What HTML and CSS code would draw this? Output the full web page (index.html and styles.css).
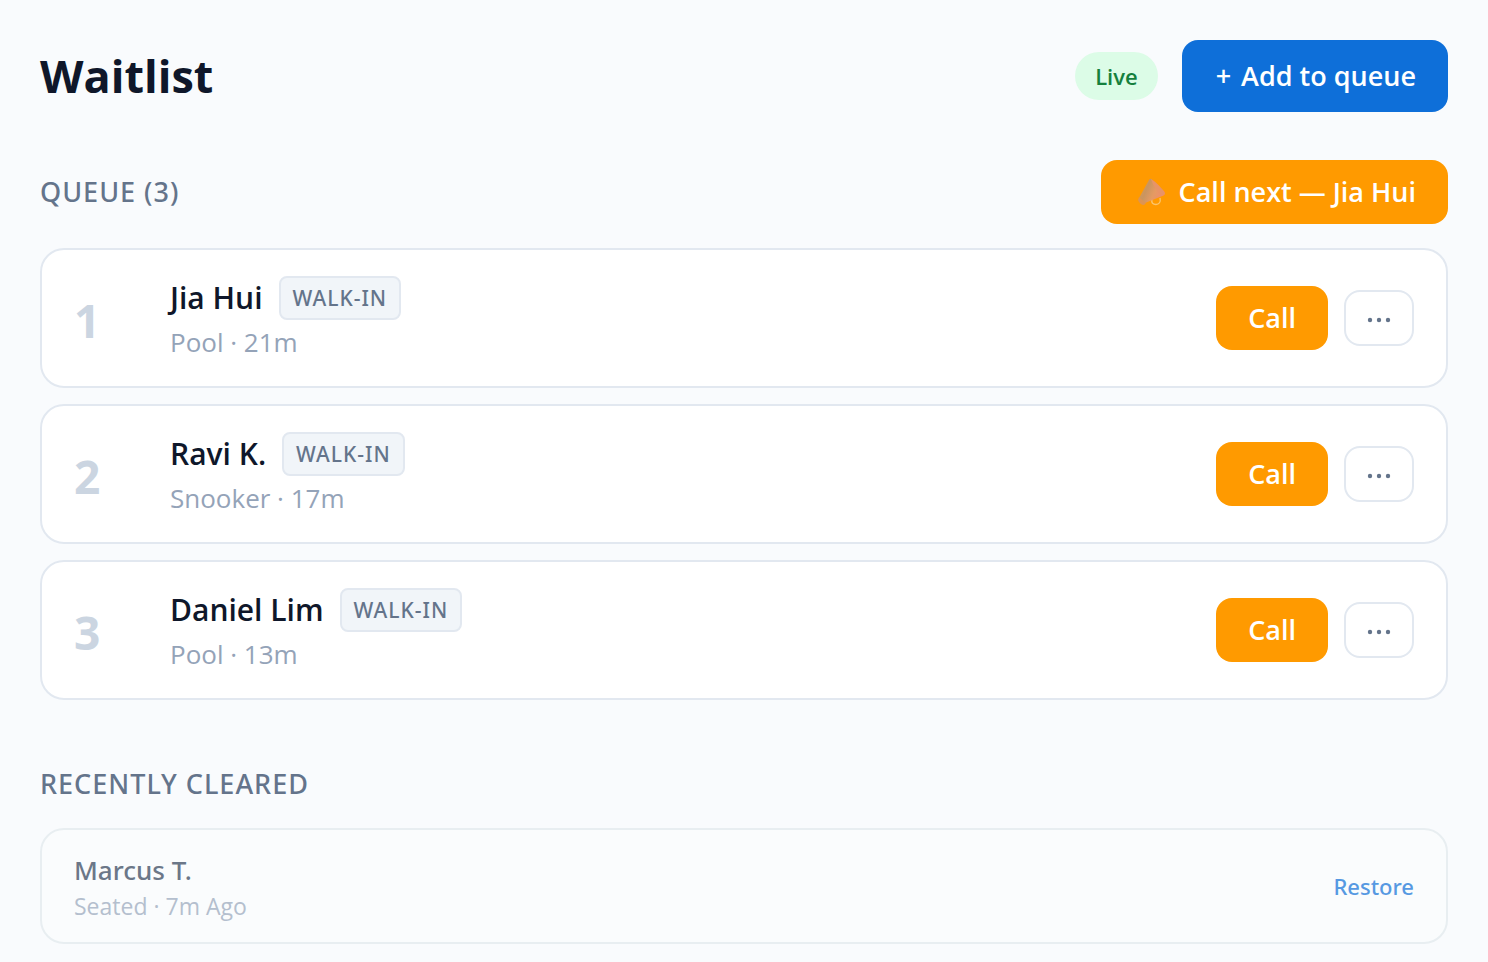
FILE: index.html
```html
<!DOCTYPE html>
<html lang="en">
<head>
<meta charset="utf-8">
<meta name="viewport" content="width=device-width, initial-scale=1">
<title>Waitlist</title>
<link rel="stylesheet" href="styles.css">
</head>
<body>
<main class="page">
  <header class="page-header">
    <h1 class="title">Waitlist</h1>
    <div class="header-actions">
      <span class="live">Live</span>
      <button type="button" class="btn btn-primary"><span>+</span><span>Add to queue</span></button>
    </div>
  </header>

  <section class="queue">
    <div class="section-header">
      <h2 class="section-title">QUEUE (3)</h2>
      <button type="button" class="btn btn-next">
        <svg class="horn" viewBox="0 0 30 30" aria-hidden="true">
          <defs>
            <linearGradient id="horn-fill" x1="0" y1="0.3" x2="1" y2="0.7">
              <stop offset="0" stop-color="#dc9a4c"/>
              <stop offset="0.3" stop-color="#c99560"/>
              <stop offset="0.6" stop-color="#e59a62"/>
              <stop offset="1" stop-color="#f08a70"/>
            </linearGradient>
          </defs>
          <path d="M15 22C14 26 16 27.500 19 27.500S24 25 23 21" fill="none" stroke="#fbc56c" stroke-width="1.300"/>
          <path d="M12 3Q13 1 15 2.500L27 14Q29 17 26.500 18.500L8 26L2 21Z" fill="url(#horn-fill)"/>
          <path d="M14 2Q22 7 27.500 16Q27.500 18 25.500 18.500Q17 12 14 2Z" fill="#e79468"/>
          <path d="M2 20L9 26L7 28Q3 28 1 23Z" fill="#dd9453"/>
        </svg>
        <span>Call next — Jia Hui</span>
      </button>
    </div>
    <ol class="list">
      <li class="card">
        <span class="rank">1</span>
        <div class="guest">
          <div class="name-row"><span class="name">Jia Hui</span><span class="tag">WALK-IN</span></div>
          <div class="meta">Pool · 21m</div>
        </div>
        <button type="button" class="btn btn-call">Call</button>
        <button type="button" class="btn-more" aria-label="More actions for Jia Hui"><svg class="dots" viewBox="0 0 24 6" aria-hidden="true"><circle cx="3" cy="3" r="2.200"/><circle cx="12" cy="3" r="2.200"/><circle cx="21" cy="3" r="2.200"/></svg></button>
      </li>
      <li class="card">
        <span class="rank">2</span>
        <div class="guest">
          <div class="name-row"><span class="name">Ravi K.</span><span class="tag">WALK-IN</span></div>
          <div class="meta">Snooker · 17m</div>
        </div>
        <button type="button" class="btn btn-call">Call</button>
        <button type="button" class="btn-more" aria-label="More actions for Ravi K."><svg class="dots" viewBox="0 0 24 6" aria-hidden="true"><circle cx="3" cy="3" r="2.200"/><circle cx="12" cy="3" r="2.200"/><circle cx="21" cy="3" r="2.200"/></svg></button>
      </li>
      <li class="card">
        <span class="rank">3</span>
        <div class="guest">
          <div class="name-row"><span class="name">Daniel Lim</span><span class="tag">WALK-IN</span></div>
          <div class="meta">Pool · 13m</div>
        </div>
        <button type="button" class="btn btn-call">Call</button>
        <button type="button" class="btn-more" aria-label="More actions for Daniel Lim"><svg class="dots" viewBox="0 0 24 6" aria-hidden="true"><circle cx="3" cy="3" r="2.200"/><circle cx="12" cy="3" r="2.200"/><circle cx="21" cy="3" r="2.200"/></svg></button>
      </li>
    </ol>
  </section>

  <section class="cleared">
    <h2 class="section-title">RECENTLY CLEARED</h2>
    <div class="cleared-card">
      <div class="guest">
        <div class="cleared-name">Marcus T.</div>
        <div class="cleared-meta">Seated · 7m Ago</div>
      </div>
      <button type="button" class="restore">Restore</button>
    </div>
  </section>
</main>
</body>
</html>
```
FILE: styles.css
```css
* { box-sizing: border-box; }

body {
  margin: 0;
  background: #f9fbfd;
  color: #0f172a;
  font-family: "Open Sans", "Noto Sans", sans-serif;
}

h1, h2, ol { margin: 0; padding: 0; }
button { font-family: inherit; cursor: pointer; }

.page {
  display: flex;
  flex-direction: column;
  padding: 40px 40px 18px;
}

.page-header,
.section-header {
  display: flex;
  align-items: center;
  justify-content: space-between;
}

.page-header { margin-bottom: 48px; }
.section-header { margin-bottom: 24px; }

.title {
  font-size: 45px;
  line-height: 64px;
  font-weight: 700;
}

.header-actions {
  display: flex;
  align-items: center;
  gap: 24px;
}

.live {
  padding: 8px 20px;
  border-radius: 24px;
  background: #dcfce7;
  color: #15803d;
  font-size: 22px;
  line-height: 32px;
  font-weight: 600;
}

.btn {
  border: 0;
  border-radius: 16px;
  color: #fff;
  font-size: 27px;
  line-height: 40px;
  font-weight: 600;
}

.btn-primary {
  display: flex;
  gap: 10px;
  padding: 16px 32px 16px 34px;
  background: #0e6fd9;
}

.btn-next,
.btn-call { padding: 12px 32px; background: #ff9a00; }

.btn-next {
  display: flex;
  align-items: center;
  gap: 12px;
  padding-left: 36px;
}

.horn { width: 30px; height: 30px; }

.section-title {
  color: #64748b;
  font-family: "Noto Sans", "Open Sans", sans-serif;
  font-size: 27px;
  line-height: 40px;
  font-weight: 500;
  letter-spacing: 1px;
}

.list {
  display: flex;
  flex-direction: column;
  gap: 16px;
  list-style: none;
}

.card {
  display: flex;
  align-items: center;
  gap: 16px;
  padding: 24px 32px;
  border: 2px solid #e2e8f0;
  border-radius: 24px;
  background: #fff;
}

.rank {
  width: 80px;
  padding-top: 4px;
  color: #cbd5e1;
  font-size: 46px;
  line-height: 64px;
  font-weight: 700;
}

.guest { flex: 1; min-width: 0; }

.name-row {
  display: flex;
  align-items: center;
  gap: 16px;
}

.name {
  font-size: 30px;
  line-height: 48px;
  font-weight: 600;
}

.tag {
  padding: 4px 12px;
  border: 2px solid #e2e8f0;
  border-radius: 8px;
  background: #f1f5f9;
  color: #64748b;
  font-family: "Noto Sans", "Open Sans", sans-serif;
  font-size: 21px;
  line-height: 32px;
  font-weight: 500;
  letter-spacing: 1px;
}

.meta {
  color: #94a3b8;
  font-size: 26px;
  line-height: 40px;
}

.btn-more {
  display: flex;
  align-items: center;
  justify-content: center;
  width: 70px;
  height: 56px;
  padding: 4px 0 0;
  border: 2px solid #e2e8f0;
  border-radius: 16px;
  background: #fff;
}

.dots { width: 24px; fill: #64748b; }

.cleared {
  display: flex;
  flex-direction: column;
  gap: 24px;
  margin-top: 64px;
}

.cleared-card {
  display: flex;
  align-items: center;
  padding: 20px 32px;
  border: 2px solid #e8eef1;
  border-radius: 24px;
  background: #fafcfd;
}

.cleared-name {
  color: #6b7788;
  font-family: "Noto Sans", "Open Sans", sans-serif;
  font-size: 26px;
  line-height: 40px;
  font-weight: 500;
}

.cleared-meta {
  color: #b4bfce;
  font-size: 23px;
  line-height: 32px;
}

.restore {
  padding: 0;
  border: 0;
  background: none;
  color: #5699e2;
  font-family: "Noto Sans", "Open Sans", sans-serif;
  font-size: 22px;
  line-height: 32px;
  font-weight: 500;
}
```
